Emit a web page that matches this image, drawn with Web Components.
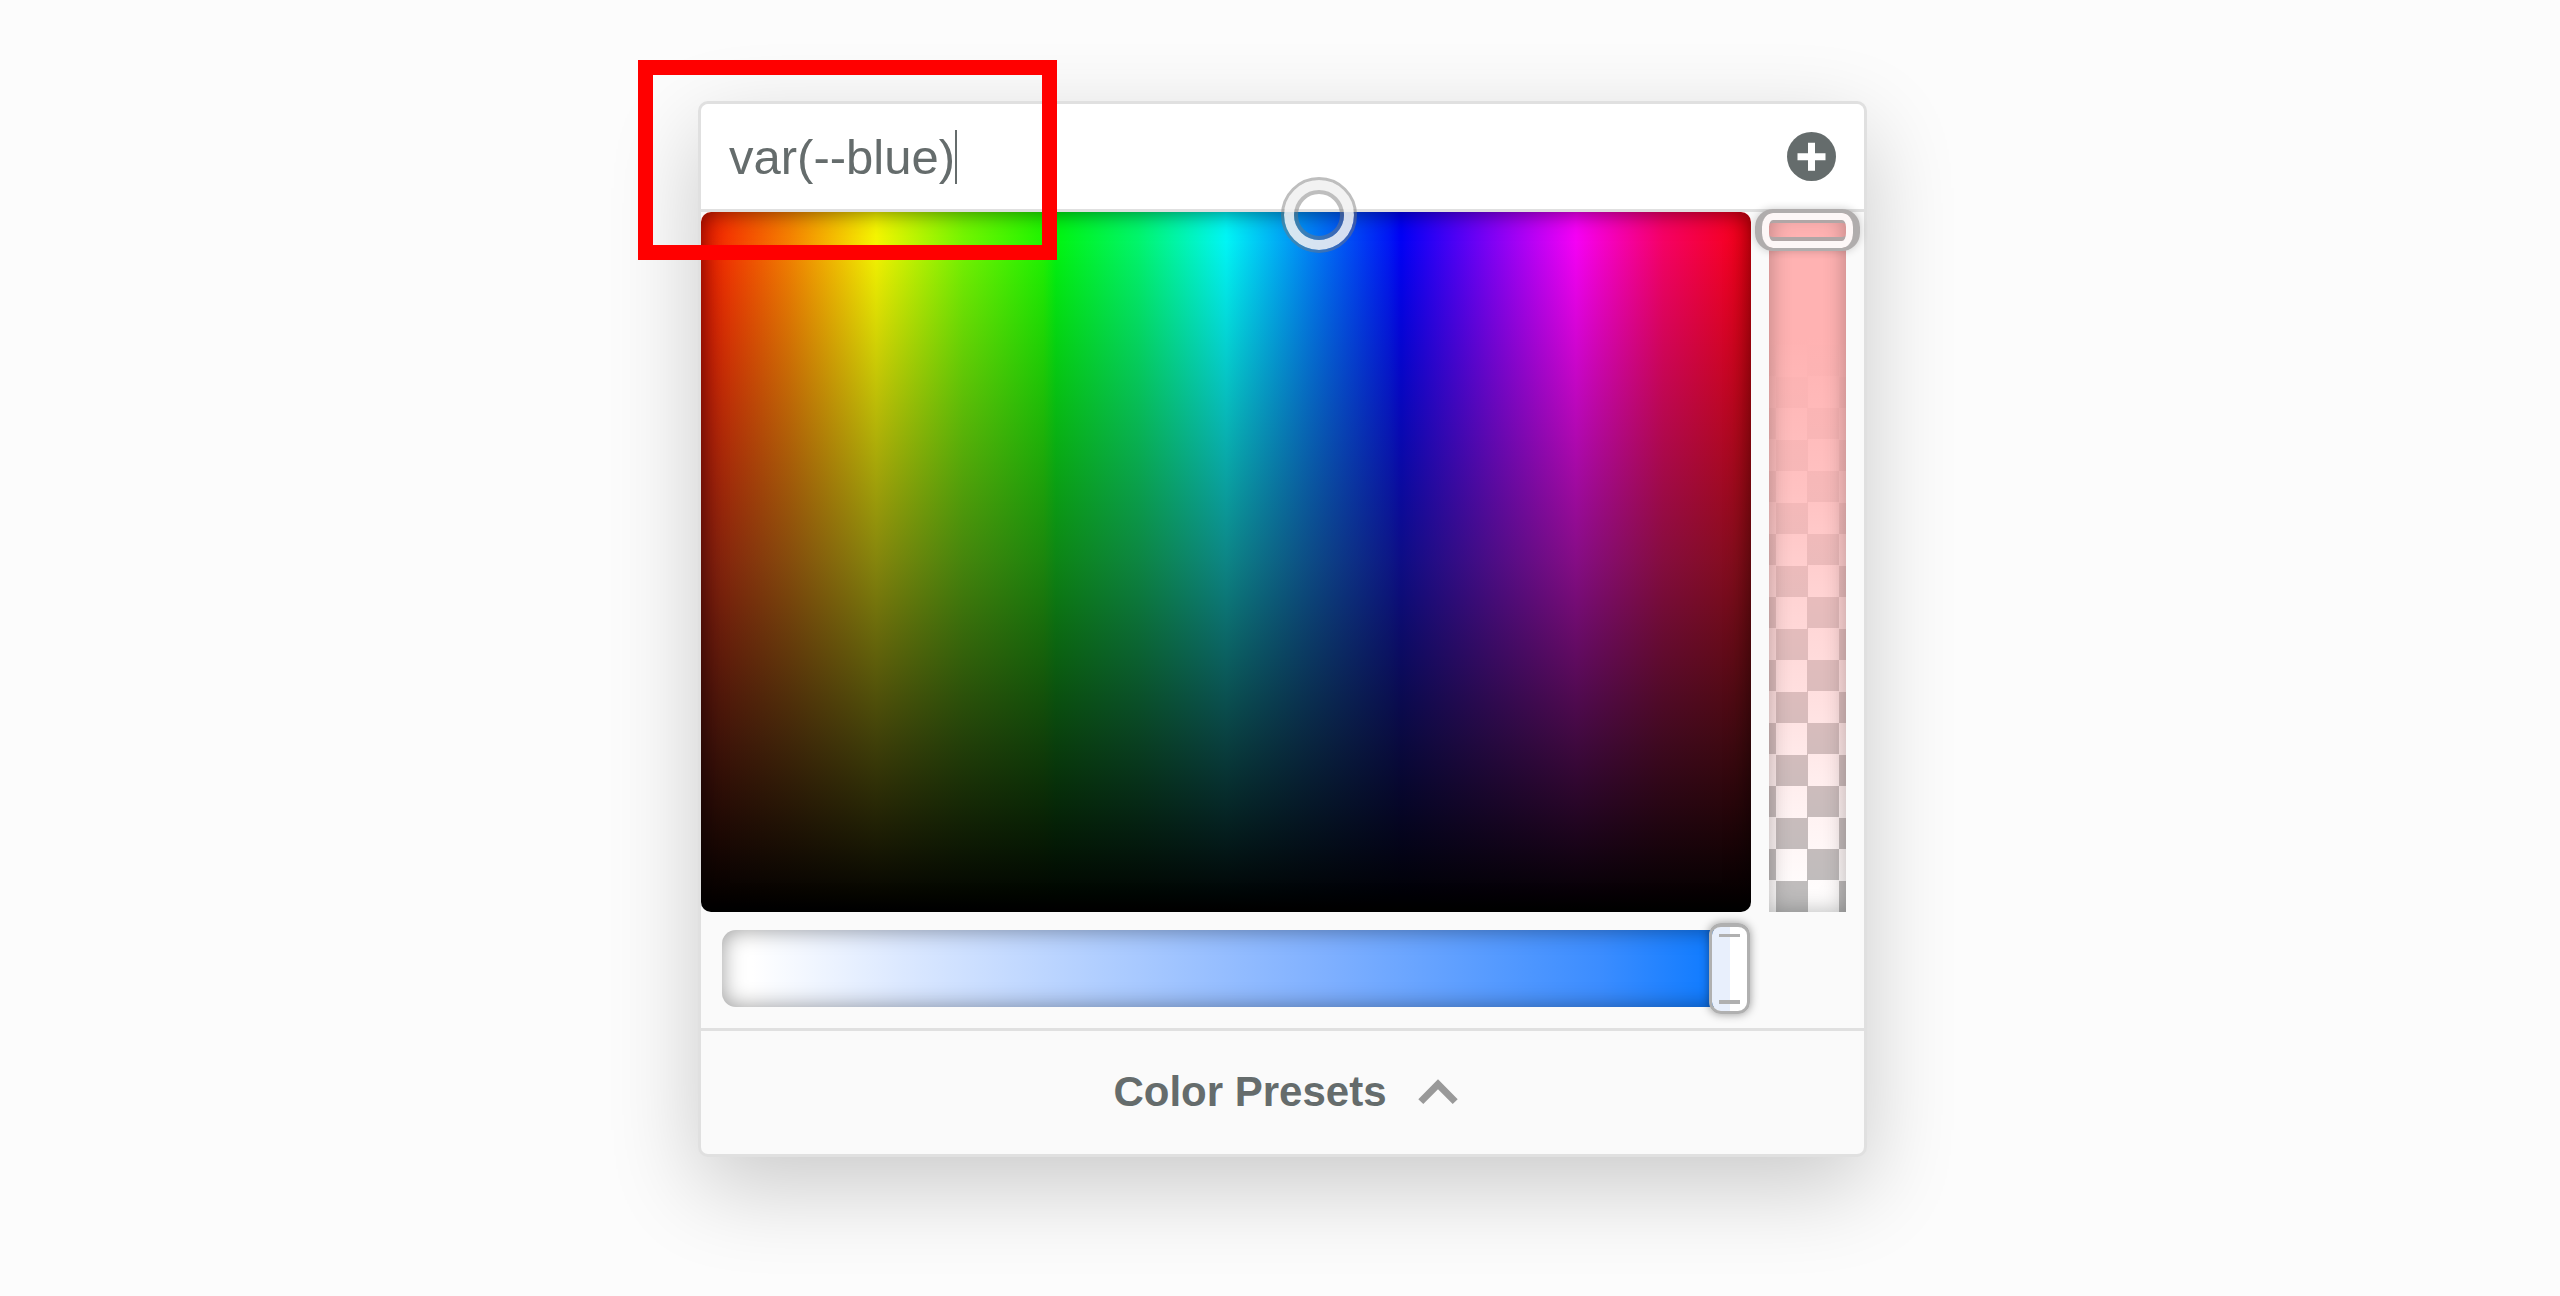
<!DOCTYPE html>
<html lang="en">
<head>
<meta charset="utf-8">
<title>Color picker</title>
<style>
  html { background: #fcfcfc; }
  body { margin: 0; font-family: "Liberation Sans", Arial, sans-serif; color: #656c6c; }
</style>
</head>
<body>
<picker-page>
  <color-picker>
    <color-field slot="field" value="var(--blue)"></color-field>
    <hue-area slot="area"></hue-area>
    <alpha-slider slot="alpha"></alpha-slider>
    <saturation-slider slot="saturation"></saturation-slider>
    <presets-toggle slot="footer">Color Presets</presets-toggle>
    <highlight-box slot="note"></highlight-box>
  </color-picker>
</picker-page>

<script>
const define = (name, html) => customElements.define(name, class extends HTMLElement {
  constructor() {
    super();
    this.attachShadow({ mode: 'open' }).innerHTML = html;
  }
  connectedCallback() {
    const text = this.shadowRoot.querySelector('input[type=text]');
    if (text) text.value = this.getAttribute('value');
  }
});

define('picker-page', `
  <style>
    :host { display: block; }
    main { display: flex; justify-content: center; padding: 101px 0 139px 5px; }
  </style>
  <main><slot></slot></main>`);

define('color-picker', `
  <style>
    :host {
      display: block; position: relative; box-sizing: border-box;
      width: 1169px; max-width: 100%;
      border: 3px solid #e0e0e0; border-radius: 10px;
      background: #fafafa;
      box-shadow: 0 30px 90px rgba(0, 0, 0, .2);
    }
    .field { border-bottom: 3px solid #e0e0e0; }
    .main { display: flex; }
    .area { flex: 1; }
    .alpha { display: flex; padding: 0 18px; }
    .saturation { padding: 18px 134px 21px 21px; border-bottom: 3px solid #e0e0e0; }
  </style>
  <div class="field"><slot name="field"></slot></div>
  <div class="main">
    <div class="area"><slot name="area"></slot></div>
    <div class="alpha"><slot name="alpha"></slot></div>
  </div>
  <div class="saturation"><slot name="saturation"></slot></div>
  <slot name="footer"></slot>
  <slot name="note"></slot>`);

define('color-field', `
  <style>
    :host {
      display: flex; align-items: center; height: 105px; padding: 0 28px;
      background: #fff; border-radius: 8px 8px 0 0;
    }
    input {
      field-sizing: content; border: 0; padding: 2px 0 0; margin: 0; outline: 0;
      background: none; color: inherit; font: 49px/55px "Liberation Sans", Arial, sans-serif;
    }
    .caret { width: 2px; height: 54px; background: #656c6c; }
    button { margin: 0 0 0 auto; padding: 0; border: 0; background: none; color: inherit; display: flex; }
  </style>
  <input type="text" aria-label="Color value"><span class="caret"></span>
  <button type="button" aria-label="Add preset">
    <svg width="49" height="49" viewBox="0 0 49 49">
      <circle cx="24.5" cy="24.5" r="24.5" fill="#656c6c"/>
      <path d="M24.5 10.8V38.8M10.5 24.8H38.5" stroke="#fff" stroke-width="7"/>
    </svg>
  </button>`);

define('hue-area', `
  <style>
    :host {
      display: block; position: relative; aspect-ratio: 3 / 2; border-radius: 10px;
      background:
        linear-gradient(rgba(24, 24, 24, 0), rgba(24, 24, 24, .53) 50%, rgba(12, 12, 12, .78) 75%, #000),
        linear-gradient(90deg, #ff1800, #ff8400 8.33%, #ffff00 16.67%, #78ff00 25%, #20ff00 32.6%, #00ff10 33.8%, #00ff70 41.67%, #00ffff 50%, #0080ff 58.33%, #0018ff 65.5%, #0000ff 66.67%, #8000ff 75%, #ff00ff 83.33%, #ff0068 91.67%, #ff0010);
      box-shadow: inset 0 0 24px rgba(0, 0, 0, .6);
    }
    button {
      position: absolute; left: 58.86%; top: 3px; transform: translate(-50%, -50%);
      box-sizing: border-box; width: 76px; height: 76px; padding: 0;
      border: 3px solid rgba(120, 120, 120, .48); border-radius: 50%; background: none;
      box-shadow: inset 0 0 0 10px rgba(240, 240, 240, .89);
    }
    span { display: block; box-sizing: border-box; width: 50px; height: 50px; margin: 10px; border: 4px solid rgba(120, 120, 120, .48); border-radius: 50%; }
  </style>
  <button type="button" aria-label="Hue and brightness"><span></span></button>`);

define('alpha-slider', `
  <style>
    :host {
      display: block; position: relative; width: 77px;
      background:
        linear-gradient(rgb(255, 178, 178) 18%, rgba(255, 184, 184, .86) 40%, rgba(255, 188, 188, .65) 55%, rgba(255, 188, 188, .46) 70%, rgba(255, 188, 188, .2) 85%, rgba(255, 188, 188, 0)),
        repeating-conic-gradient(#bcbcbc 0 25%, #fff 0 50%) center bottom / 63px 63px;
      box-shadow: inset 0 0 22px rgba(0, 0, 0, .3);
    }
    input {
      appearance: none; -webkit-appearance: none; position: absolute; inset: -3px -14px 0;
      width: 105px; height: calc(100% + 3px); margin: 0; background: none;
      writing-mode: vertical-lr; direction: rtl;
    }
    input::-webkit-slider-thumb {
      -webkit-appearance: none; box-sizing: border-box; width: 105px; height: 42px;
      border: solid #b0adad; border-width: 4px 7px 3px; border-radius: 18px;
      box-shadow:
        inset 0 0 0 7px #fdf7f7,
        inset 0 10px #b0a6a6, inset 0 -11px #b0a6a6, 0 0 8px rgba(0, 0, 0, .2);
    }
  </style>
  <input type="range" min="0" max="100" value="100" aria-label="Opacity">`);

define('saturation-slider', `
  <style>
    :host {
      display: block; position: relative; height: 77px; border-radius: 14px;
      background: linear-gradient(90deg, #fff 3%, #dbe8ff 18%, #7fb0ff 60%, #3c8dff 87%, #147dff 97%);
      box-shadow: inset 0 0 22px rgba(0, 0, 0, .4);
    }
    input {
      appearance: none; -webkit-appearance: none; position: absolute; inset: -7px -20px -7px 0;
      width: calc(100% + 20px); height: 91px; margin: 0; background: none;
    }
    input::-webkit-slider-thumb {
      -webkit-appearance: none; box-sizing: border-box; width: 41px; height: 91px;
      border: 3px solid #b0b0b0; border-top-width: 4px; border-radius: 12px;
      background:
        linear-gradient(#b0b0b0, #b0b0b0) 7px 7px / 21px 3px no-repeat,
        linear-gradient(#b0b0b0, #b0b0b0) 7px 73px / 21px 4px no-repeat,
        linear-gradient(90deg, #e8effc 18px, #fff 18px);
      background-clip: padding-box;
      box-shadow: 0 0 10px rgba(0, 0, 0, .4);
    }
  </style>
  <input type="range" min="0" max="100" value="100" aria-label="Saturation">`);

define('presets-toggle', `
  <style>
    :host { display: block; }
    button {
      display: flex; align-items: center; justify-content: center; gap: 31px;
      width: 100%; height: 123px; border: 0; padding: 0 0 2px 6px; background: none; color: inherit;
      font: bold 42px/48px "Liberation Sans", Arial, sans-serif;
    }
  </style>
  <button type="button"><slot></slot>
    <svg width="40" height="26" viewBox="0 0 40 26"><path d="M2.8 22.6L20 5.2L37.2 22.6" fill="none" stroke="#999" stroke-width="7"/></svg>
  </button>`);

define('highlight-box', `
  <style>
    :host {
      display: block; position: absolute; left: -63px; top: -44px; box-sizing: border-box;
      width: 419px; height: 200px; border: 15px solid #f00; pointer-events: none;
    }
  </style>`);
</script>
</body>
</html>
